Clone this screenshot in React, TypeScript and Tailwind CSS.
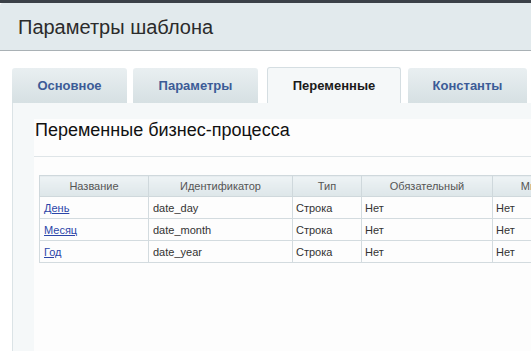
import React from 'react'

const tabs = [
  { label: 'Основное', w: 'w-[115px]', ml: 'ml-0', active: false },
  { label: 'Параметры', w: 'w-[125px]', ml: 'ml-[6px]', active: false },
  { label: 'Переменные', w: 'w-[134px]', ml: 'ml-[9px]', active: true },
  { label: 'Константы', w: 'w-[119px]', ml: 'ml-[7px]', active: false },
]

const cols = [
  { title: 'Название', w: 'w-[109px]' },
  { title: 'Идентификатор', w: 'w-[144px]' },
  { title: 'Тип', w: 'w-[69px]' },
  { title: 'Обязательный', w: 'w-[131px]' },
  { title: 'Множественный', w: 'w-[140px]' },
]

const rows = [
  { name: 'День', id: 'date_day' },
  { name: 'Месяц', id: 'date_month' },
  { name: 'Год', id: 'date_year' },
]

export default function App() {
  return (
    <div className="w-full h-screen overflow-hidden bg-white font-['Liberation_Sans',Arial,sans-serif]">
      <div className="w-[640px]">
        <div className="border-t-[3px] border-[#3b4148]">
          <div className="h-[48px] bg-[#e2eaed] border-b border-[#a9b1b5] rounded-tl-[3px] flex items-center pl-[18px]">
            <h1 className="text-[20px] leading-[24px] text-[#2b2b2b]">Параметры шаблона</h1>
          </div>
        </div>

        <div className="pt-[16px] pl-[12px] flex items-end">
          {tabs.map((t) =>
            t.active ? (
              <div
                key={t.label}
                className={`${t.w} ${t.ml} h-[36px] rounded-t-[3px] border border-b-0 border-[#d5dee2] bg-[#f5f8f9] flex items-center justify-center text-[13px] font-bold text-[#1a1a1a]`}
              >
                {t.label}
              </div>
            ) : (
              <div
                key={t.label}
                className={`${t.w} ${t.ml} h-[35px] rounded-t-[3px] bg-gradient-to-b from-[#e9eff1] to-[#d6e0e3] flex items-center justify-center text-[13px] font-bold text-[#3c5b97]`}
              >
                {t.label}
              </div>
            )
          )}
        </div>

        <div className="ml-[12px] border-l border-[#dbe3e6] bg-[#f5f8f9] pt-[16px] pl-[21px] h-[260px]">
          <div className="bg-[#fdfdfd] h-full pt-[1px]">
            <div className="pl-[1px] pb-[16px] border-b border-[#dfe5e8]">
              <h2 className="text-[18px] leading-[20px] text-[#111]">Переменные бизнес-процесса</h2>
            </div>
            <table className="mt-[18px] ml-[5px] border-collapse text-[11px] text-[#333]">
              <thead>
                <tr>
                  {cols.map((c) => (
                    <th
                      key={c.title}
                      className={`${c.w} h-[21px] border border-[#cfd8dc] bg-gradient-to-b from-[#eef3f5] to-[#dde6e9] font-normal text-[#555] text-center pt-[1px]`}
                    >
                      {c.title}
                    </th>
                  ))}
                </tr>
              </thead>
              <tbody>
                {rows.map((r) => (
                  <tr key={r.id}>
                    <td className="h-[22px] border border-[#d3dbdf] px-[4px] pt-[2px]">
                      <a href="#" className="text-[#2b45a8] underline">{r.name}</a>
                    </td>
                    <td className="border border-[#d3dbdf] px-[4px] pt-[2px]">{r.id}</td>
                    <td className="border border-[#d3dbdf] px-[3px] pt-[2px]">Строка</td>
                    <td className="border border-[#d3dbdf] px-[3px] pt-[2px]">Нет</td>
                    <td className="border border-[#d3dbdf] px-[3px] pt-[2px]">Нет</td>
                  </tr>
                ))}
              </tbody>
            </table>
          </div>
        </div>
      </div>
    </div>
  )
}
